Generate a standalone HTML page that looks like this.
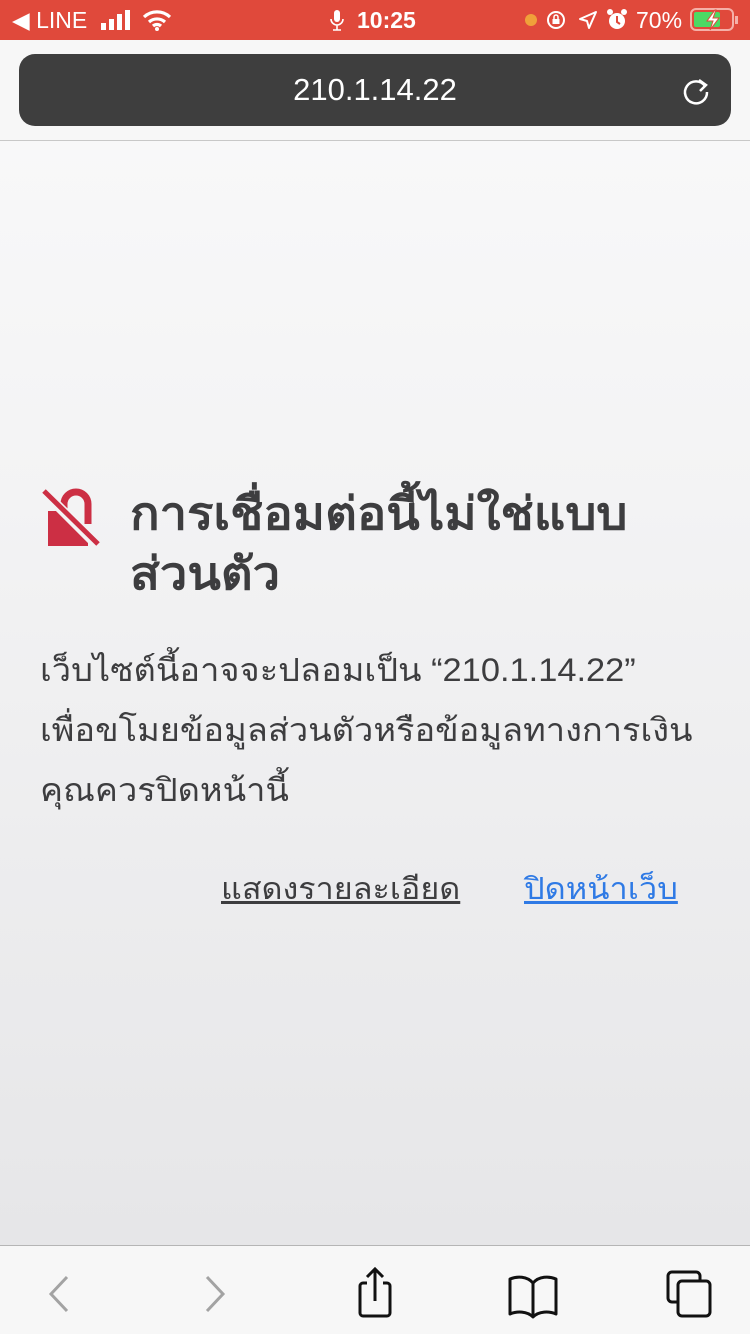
<!DOCTYPE html>
<html><head><meta charset="utf-8"><style>
*{margin:0;padding:0;box-sizing:border-box}
body{width:750px;height:1334px;overflow:hidden;position:relative;font-family:"Liberation Sans",sans-serif;background:linear-gradient(#f8f8f9 140px,#f3f3f4 500px,#e6e6e8 1244px)}
.sb{position:absolute;left:0;top:0;width:750px;height:40px;background:#e0493b;color:#fff;font-size:23px}
.hdr{position:absolute;top:40px;left:0;width:750px;height:101px;background:#f7f7f7;border-bottom:1px solid #c8c8c8}
.addr{position:absolute;left:19px;top:14px;width:712px;height:72px;border-radius:16px;background:#3e3e3e;color:#fff;font-size:31px;text-align:center;line-height:72px}
.t{position:absolute;color:#3d3d3f;transform-origin:0 0;white-space:nowrap}
.bar{position:absolute;left:0;top:1245px;width:750px;height:89px;background:#f7f7f7;border-top:1px solid #b5b5b5}
</style></head><body>
<div class="sb">
<span style="position:absolute;left:12px;top:7px">◀ LINE</span>
<svg style="position:absolute;left:100px;top:10px" width="34" height="20"><rect x="1" y="13" width="5" height="7" fill="#fff"/><rect x="9" y="9" width="5" height="11" fill="#fff"/><rect x="17" y="4" width="5" height="16" fill="#fff"/><rect x="25" y="0" width="5" height="20" fill="#fff"/></svg>
<svg style="position:absolute;left:142px;top:9px" width="30" height="22"><path d="M2 8a19 19 0 0 1 26 0M7 13a12 12 0 0 1 16 0M11 17a6 6 0 0 1 8 0" stroke="#fff" stroke-width="3.2" fill="none"/><circle cx="15" cy="20" r="2" fill="#fff"/></svg>
<svg style="position:absolute;left:330px;top:10px" width="14" height="22"><rect x="4" y="0" width="6" height="12" rx="3" fill="#fff"/><path d="M1 9a6 6 0 0 0 12 0M7 15v5M3 20h8" stroke="#fff" stroke-width="1.6" fill="none"/></svg>
<span style="position:absolute;left:357px;top:7px;font-weight:bold">10:25</span>
<span style="position:absolute;left:525px;top:14px;width:12px;height:12px;border-radius:6px;background:#f0a03a"></span>
<svg style="position:absolute;left:545px;top:9px" width="22" height="22"><circle cx="11" cy="11" r="8" stroke="#fff" stroke-width="2" fill="none"/><rect x="7.5" y="10" width="7" height="5" fill="#fff"/><path d="M9 10V8a2 2 0 0 1 4 0v2" stroke="#fff" stroke-width="1.5" fill="none"/></svg>
<svg style="position:absolute;left:578px;top:10px" width="20" height="20"><path d="M18 2L2 9l7 2 2 7z" stroke="#fff" stroke-width="2" fill="none" stroke-linejoin="round"/></svg>
<svg style="position:absolute;left:606px;top:8px" width="22" height="24"><circle cx="11" cy="13" r="8" fill="#fff"/><circle cx="4" cy="4" r="3" fill="#fff"/><circle cx="18" cy="4" r="3" fill="#fff"/><path d="M11 8v6l3 2" stroke="#e0493b" stroke-width="2" fill="none"/></svg>
<span style="position:absolute;left:636px;top:7px">70%</span>
<svg style="position:absolute;left:690px;top:8px" width="50" height="24"><rect x="1" y="1" width="42" height="21" rx="5" stroke="#f5b0a8" stroke-width="2" fill="none"/><rect x="4" y="4" width="26" height="15" rx="2" fill="#4cd964"/><rect x="45" y="8" width="3" height="8" fill="#f5b0a8"/><path d="M25 2l-8 11h6l-3 9 9-12h-6l3-8z" fill="#fff" stroke="#e0493b" stroke-width="1"/></svg>
</div>
<div class="hdr"><div class="addr">210.1.14.22
<svg style="position:absolute;right:19px;top:21px" width="32" height="32"><path d="M25 11A11 11 0 1 0 27 17" stroke="#fff" stroke-width="2.5" fill="none"/><path d="M19 5l7 5-6 6" stroke="#fff" stroke-width="2.5" fill="none"/></svg></div></div>
<svg style="position:absolute;left:38px;top:486px" width="64" height="60"><path d="M50 38V18a12 12 0 0 0-24 0v9" stroke="#cc2f44" stroke-width="7" fill="none"/><path d="M30 25L50 48v13H10V25z" fill="#cc2f44"/><path d="M4 4L58 58" stroke="#f3f3f4" stroke-width="10"/><path d="M6 5L60 58" stroke="#cc2f44" stroke-width="5"/></svg>
<div class="t" style="left:130px;top:484px;font-size:45px;font-weight:bold;line-height:60px;transform:scaleX(1.088)">การเชื่อมต่อนี้ไม่ใช่แบบ<br>ส่วนตัว</div>
<div class="t" style="left:40px;top:640px;font-size:32px;line-height:60px;transform:scaleX(1.075)">เว็บไซต์นี้อาจจะปลอมเป็น “210.1.14.22”<br>เพื่อขโมยข้อมูลส่วนตัวหรือข้อมูลทางการเงิน<br>คุณควรปิดหน้านี้</div>
<div class="t" style="left:221px;top:866px;font-size:30px;text-decoration:underline;transform:scaleX(1.077)">แสดงรายละเอียด</div>
<div class="t" style="left:524px;top:866px;font-size:30px;text-decoration:underline;color:#2f7ae5;transform:scaleX(1.085)">ปิดหน้าเว็บ</div>
<div class="bar">
<svg style="position:absolute;left:44px;top:28px" width="30" height="40"><path d="M23 3L7 20l16 17" stroke="#a3a3a3" stroke-width="3" fill="none"/></svg>
<svg style="position:absolute;left:200px;top:28px" width="30" height="40"><path d="M7 3l16 17L7 37" stroke="#a3a3a3" stroke-width="3" fill="none"/></svg>
<svg style="position:absolute;left:352px;top:20px" width="46" height="54"><path d="M15 17H11a3 3 0 0 0-3 3v27a3 3 0 0 0 3 3h24a3 3 0 0 0 3-3V20a3 3 0 0 0-3-3h-4M23 35V4M15 11l8-8 8 8" stroke="#111" stroke-width="3" fill="none"/></svg>
<svg style="position:absolute;left:505px;top:24px" width="56" height="50"><path d="M28 13C22 6 12 6 5 9v35c7-3 17-3 23 3 6-6 16-6 23-3V9c-7-3-17-3-23 4zM28 13v34" stroke="#111" stroke-width="3" fill="none" stroke-linejoin="round"/></svg>
<svg style="position:absolute;left:664px;top:22px" width="54" height="52"><rect x="4" y="4" width="32" height="30" rx="4" stroke="#111" stroke-width="3" fill="none"/><rect x="14" y="13" width="32" height="35" rx="4" stroke="#111" stroke-width="3" fill="#f7f7f7"/></svg>
</div>
</body></html>
